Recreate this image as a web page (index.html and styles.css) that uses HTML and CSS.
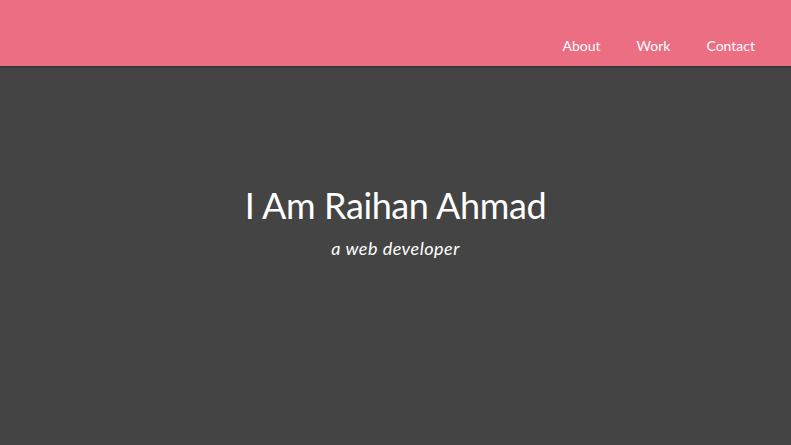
FILE: index.html
```html
<!DOCTYPE html>
<html>
<head>
<meta charset="utf-8">
<link rel="stylesheet" href="styles.css">
</head>
<body>
<header class="topbar">
  <nav class="nav">
    <a href="#">About</a>
    <a href="#">Work</a>
    <a href="#">Contact</a>
  </nav>
</header>
<main class="hero">
  <h1 class="title">I Am Raihan Ahmad</h1>
  <p class="subtitle">a web developer</p>
</main>
</body>
</html>
```
FILE: styles.css
```css
html, body {
  margin: 0;
  height: 100%;
}
body {
  background: #444444;
  font-family: Lato, "Open Sans", sans-serif;
  color: #fff;
  display: flex;
  flex-direction: column;
}
.topbar {
  height: 66px;
  background: #ec6e83;
  box-shadow: 0 1px 2px rgba(0,0,0,0.35);
  display: flex;
  align-items: center;
  justify-content: flex-end;
  padding-right: 36px;
  box-sizing: border-box;
}
.nav {
  display: flex;
  gap: 36px;
  padding-top: 24px;
}
.nav a {
  color: #fff;
  text-decoration: none;
  font-size: 14px;
}
.hero {
  flex: 1;
  display: flex;
  flex-direction: column;
  align-items: center;
  padding-top: 117px;
}
.title {
  margin: 0;
  font-weight: 400;
  font-size: 36px;
  line-height: 44px;
  letter-spacing: -0.4px;
}
.subtitle {
  margin: 10px 0 0;
  font-style: italic;
  font-size: 18px;
  line-height: 22px;
  letter-spacing: 0.5px;
}
```
